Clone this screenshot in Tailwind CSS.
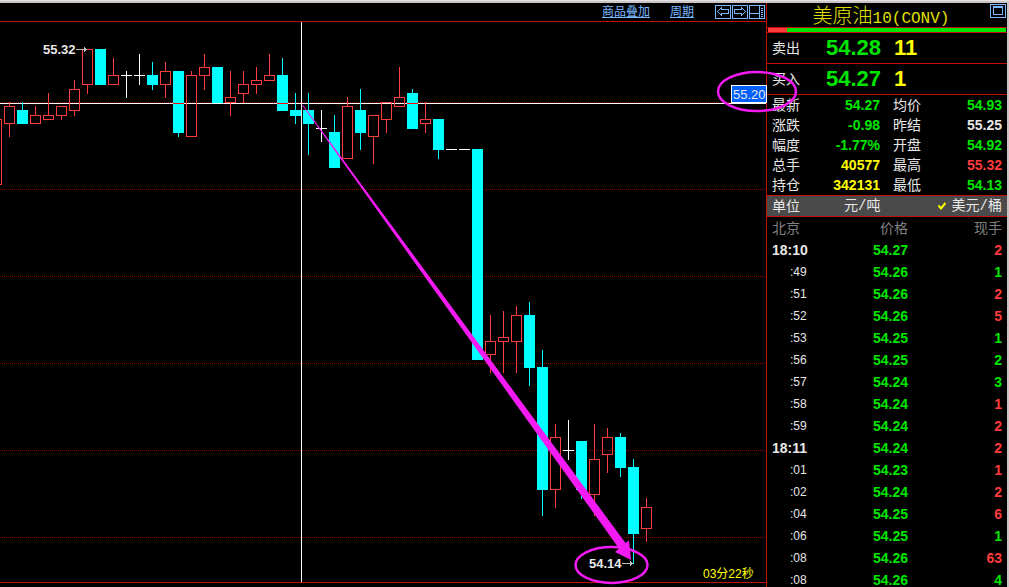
<!DOCTYPE html>
<html lang="zh-CN">
<head>
  <meta charset="UTF-8">
  <meta name="viewport" content="width=device-width, initial-scale=1.0">
  <title>美原油10(CONV)</title>
  <script src="https://cdn.jsdelivr.net/npm/@tailwindcss/browser@4"></script>
</head>
<body class="bg-black text-[#e8e8e8] font-['Liberation_Sans','Noto_Sans_CJK_SC',sans-serif] text-sm overflow-hidden">
  <div class="flex flex-col h-screen overflow-hidden">
    <div class="h-[3px] shrink-0 bg-[#e4e4e4] border-b-2 border-[#ccc4c4]"></div>
    <div class="flex flex-1 min-h-0">
      <!-- Chart -->
      <main class="relative z-10 flex-1 min-w-0">
        <header class="flex items-center justify-end h-[19px] pr-px border-b border-[#c01000] text-[#7ab8ff] text-xs leading-4">
          <a href="#" class="underline mr-5">商品叠加</a>
          <a href="#" class="underline mr-[21px]">周期</a>
          <div class="flex gap-px">
            <button aria-label="上一个" class="block">
              <svg class="block" width="16" height="14" viewBox="0 0 16 14" fill="none" stroke="#7ab8ff" shape-rendering="crispEdges"><path d="M.5.5h15v13H.5z"/><path d="M2.5 6.5l4-4v2h7v4h-7v2z"/></svg>
            </button>
            <button aria-label="下一个" class="block">
              <svg class="block" width="16" height="14" viewBox="0 0 16 14" fill="none" stroke="#7ab8ff" shape-rendering="crispEdges"><path d="M.5.5h15v13H.5z"/><path d="M13.5 6.5l-4-4v2h-7v4h7v2z"/></svg>
            </button>
            <button aria-label="布局" class="block">
              <svg class="block" width="16" height="14" viewBox="0 0 16 14" fill="none" stroke="#7ab8ff" shape-rendering="crispEdges"><path d="M.5.5h15v13H.5zM10.5 1v12M1 8.5h9"/><path d="M12 3.5h2M12 5.5h2M12 7.5h2M12 9.5h2M12 11.5h2"/></svg>
            </button>
          </div>
        </header>
        <svg class="block w-full h-auto overflow-visible" viewBox="0 22 766 565">
          <g id="grid" stroke="#900000" stroke-dasharray="1 1" shape-rendering="crispEdges"></g>
          <path d="M0 103.5H766M301.5 22V582" stroke="#fff" shape-rendering="crispEdges"/>
          <g id="candles" shape-rendering="crispEdges"></g>
          <path d="M0 582.5H766" stroke="#c01000" shape-rendering="crispEdges"/>

          <!-- High / low marks -->
          <g fill="#e8e8e8" font-size="13" font-weight="bold">
            <text x="43" y="54">55.32</text>
            <text x="589" y="568">54.14</text>
          </g>
          <path d="M76 49.5h11M84.5 47v5M85.5 48v3M622 563.5h11M630.5 561v5M631.5 562v3" stroke="#bbb" shape-rendering="crispEdges"/>

          <!-- Cursor price -->
          <rect x="731.5" y="85.5" width="35" height="17" fill="#0060ff" stroke="#fff" shape-rendering="crispEdges"/>
          <text x="733" y="99" fill="#e8e8e8" font-size="13">55.20</text>
          <text x="703" y="578" fill="#ffff00" font-size="12">03分22秒</text>

          <!-- Annotations -->
          <path d="M302 105L303 105L625.5 543L629 540.5L631 560L615 552L619 548.5Z" fill="#f31af3"/>
          <g fill="none" stroke="#f31af3" stroke-width="2.5">
            <ellipse cx="757" cy="91.5" rx="39" ry="19.5"/>
            <ellipse cx="611.5" cy="565" rx="36" ry="18"/>
          </g>
        </svg>
      </main>

      <!-- Quote panel -->
      <aside class="flex flex-col w-[243px] shrink-0 border-l border-l-[#c01000] border-r-2 border-r-[#ccc4c4]">
        <div class="relative h-6 shrink-0">
          <h1 class="pr-3 text-center text-xl leading-6 text-[#e0e000] font-['Noto_Sans_CJK_SC',sans-serif] font-light">美原油<span class="text-base leading-6 font-['Liberation_Mono',monospace]">10(CONV)</span></h1>
          <button aria-label="最大化" class="absolute top-px right-px">
            <svg class="block" width="16" height="14" viewBox="0 0 16 14" fill="none" stroke="#7ab8ff" shape-rendering="crispEdges"><path d="M.5.5h15v13H.5z"/><path d="M3.5 2.5h9v8h-9zM3 3.5h10"/></svg>
          </button>
        </div>
        <div class="flex h-[6px] shrink-0 border-y border-[#c01000] px-px">
          <div class="w-[19px] bg-[#ff3c3c]"></div>
          <div class="flex-1 bg-[#00e600]"></div>
        </div>
        <dl class="shrink-0">
          <div class="flex items-center h-[31px] pl-[5px] border-b border-[#c01000]">
            <dt class="w-[54px]">卖出</dt>
            <dd class="w-[68px] text-[22px] font-bold text-[#00e600]">54.28</dd>
            <dd class="text-[22px] font-bold text-[#ffff00]">11</dd>
          </div>
          <div class="flex items-center h-[31px] pl-[5px] border-b border-[#c01000]">
            <dt class="w-[54px]">买入</dt>
            <dd class="w-[68px] text-[22px] font-bold text-[#00e600]">54.27</dd>
            <dd class="text-[22px] font-bold text-[#ffff00]">1</dd>
          </div>
        </dl>
        <table class="w-full shrink-0 table-fixed leading-5 border-b border-[#c01000]">
          <colgroup><col class="w-[42px]"><col class="w-[71px]"><col class="w-[54px]"><col></colgroup>
          <tbody id="stats"></tbody>
        </table>
        <div class="flex items-center h-[21px] shrink-0 pl-[5px] pr-[5px] bg-[#4a4a4a] border-b border-[#c01000]">
          <span class="w-[72px]">单位</span>
          <button class="font-['Liberation_Mono','Noto_Sans_CJK_SC',monospace]">元/吨</button>
          <button class="flex items-center gap-[6px] ml-auto font-['Liberation_Mono','Noto_Sans_CJK_SC',monospace]">
            <svg width="8" height="8" viewBox="0 0 8 8" fill="none" stroke="#ffff00" stroke-width="2"><path d="M.5 3.5l2.500 3l4.500-5.500"/></svg>美元/桶
          </button>
        </div>
        <table class="w-full table-fixed leading-[22px]">
          <thead class="text-[#808080]">
            <tr class="h-[22px]">
              <th class="w-[62px] pl-[5px] text-left font-normal">北京</th>
              <th class="w-[79px] text-right font-normal">价格</th>
              <th class="pr-[5px] text-right font-normal">现手</th>
            </tr>
          </thead>
          <tbody id="ticks" class="font-bold"></tbody>
        </table>
      </aside>
    </div>
  </div>

  <script>
    const RED = '#ff3c3c', CYAN = '#00ffff', WHITE = '#ffffff';

    document.getElementById('grid').innerHTML = [102, 189, 276, 363, 450, 537]
      .map(y => `<path d="M0 ${y}.5H766"/>`).join('');

    // [type, body top, body bottom, wick top, wick bottom]
    const candles = [
      ['r', 119, 185, 119, 185], ['r', 106, 124, 102, 137], ['c', 110, 124, 102, 124], ['r', 115, 124, 106, 124],
      ['r', 115, 120, 93, 120], ['r', 106, 116, 106, 120], ['r', 89, 111, 80, 116], ['r', 49, 85, 49, 94],
      ['c', 49, 85, 49, 85], ['r', 75, 85, 58, 85], ['w', 75, 76, 71, 98], ['w', 75, 76, 54, 85],
      ['c', 75, 85, 62, 90], ['r', 71, 85, 62, 98], ['c', 71, 133, 71, 137], ['r', 75, 137, 71, 137],
      ['r', 67, 76, 54, 90], ['c', 67, 103, 67, 103], ['r', 97, 103, 71, 116], ['r', 84, 94, 71, 103],
      ['r', 80, 85, 67, 94], ['r', 75, 81, 54, 81], ['c', 75, 111, 58, 111], ['c', 110, 116, 93, 124],
      ['c', 110, 124, 93, 155], ['w', 128, 129, 110, 142], ['c', 132, 168, 115, 168], ['r', 106, 159, 97, 159],
      ['c', 110, 133, 89, 150], ['r', 115, 137, 115, 164], ['r', 102, 120, 102, 133], ['r', 97, 107, 67, 107],
      ['c', 93, 129, 89, 129], ['r', 119, 124, 102, 133], ['c', 119, 150, 119, 159], ['w', 149, 150, 149, 150],
      ['w', 149, 150, 149, 150], ['c', 149, 360, 149, 360], ['r', 341, 355, 315, 373], ['r', 337, 342, 311, 373],
      ['r', 315, 342, 306, 373], ['c', 315, 368, 302, 386], ['c', 367, 490, 350, 516], ['r', 437, 490, 424, 508],
      ['w', 450, 451, 420, 460], ['c', 441, 490, 441, 499], ['r', 459, 495, 424, 516], ['r', 437, 455, 428, 473],
      ['c', 437, 468, 433, 477], ['c', 467, 534, 459, 564], ['r', 507, 529, 498, 542],
    ];
    document.getElementById('candles').innerHTML = candles.map(([type, top, bottom, high, low], i) => {
      const x = i * 13 - 4;
      const color = { r: RED, c: CYAN, w: WHITE }[type];
      const wick = `<path d="M${x + 0.5} ${high}V${top}M${x + 0.5} ${bottom}V${low}" stroke="${color}"/>`;
      if (type === 'r') {
        return wick + `<rect x="${x - 4.5}" y="${top + 0.5}" width="10" height="${bottom - top - 1}" fill="none" stroke="${color}"/>`;
      }
      // The cursor line inverts to red where it crosses a filled body
      const cross = type === 'c' && top < 103 && bottom > 103
        ? `<path d="M${x - 5} 103.5h11" stroke="#ff0000"/>` : '';
      return wick + `<rect x="${x - 5}" y="${top}" width="11" height="${bottom - top}" fill="${color}"/>` + cross;
    }).join('');

    const colors = { g: 'text-[#00e600]', r: 'text-[#ff3c3c]', y: 'text-[#ffff00]', w: 'text-[#e8e8e8]' };

    const stats = [
      ['最新', '54.27', 'g', '均价', '54.93', 'g'],
      ['涨跌', '-0.98', 'g', '昨结', '55.25', 'w'],
      ['幅度', '-1.77%', 'g', '开盘', '54.92', 'g'],
      ['总手', '40577', 'y', '最高', '55.32', 'r'],
      ['持仓', '342131', 'y', '最低', '54.13', 'g'],
    ];
    document.getElementById('stats').innerHTML = stats.map(([a, av, ac, b, bv, bc]) => `
      <tr class="h-5">
        <th class="pl-[5px] text-left font-normal">${a}</th>
        <td class="text-right font-bold ${colors[ac]}">${av}</td>
        <th class="pl-[13px] text-left font-normal">${b}</th>
        <td class="pr-[5px] text-right font-bold ${colors[bc]}">${bv}</td>
      </tr>`).join('');

    const ticks = [
      ['18:10', '54.27', 2, 'r'], [':49', '54.26', 1, 'g'], [':51', '54.26', 2, 'r'], [':52', '54.26', 5, 'r'],
      [':53', '54.25', 1, 'g'], [':56', '54.25', 2, 'g'], [':57', '54.24', 3, 'g'], [':58', '54.24', 1, 'r'],
      [':59', '54.24', 2, 'r'], ['18:11', '54.24', 2, 'r'], [':01', '54.23', 1, 'r'], [':02', '54.24', 2, 'r'],
      [':04', '54.25', 6, 'r'], [':06', '54.25', 1, 'g'], [':08', '54.26', 63, 'r'], [':08', '54.26', 4, 'g'],
    ];
    document.getElementById('ticks').innerHTML = ticks.map(([time, price, volume, c]) => `
      <tr class="h-[22px]">
        <td class="${time[0] === ':' ? 'pl-[23px] text-xs leading-[22px] font-normal' : 'pl-[5px]'}">${time}</td>
        <td class="text-right text-[#00e600]">${price}</td>
        <td class="pr-[5px] text-right ${colors[c]}">${volume}</td>
      </tr>`).join('');
  </script>
</body>
</html>
